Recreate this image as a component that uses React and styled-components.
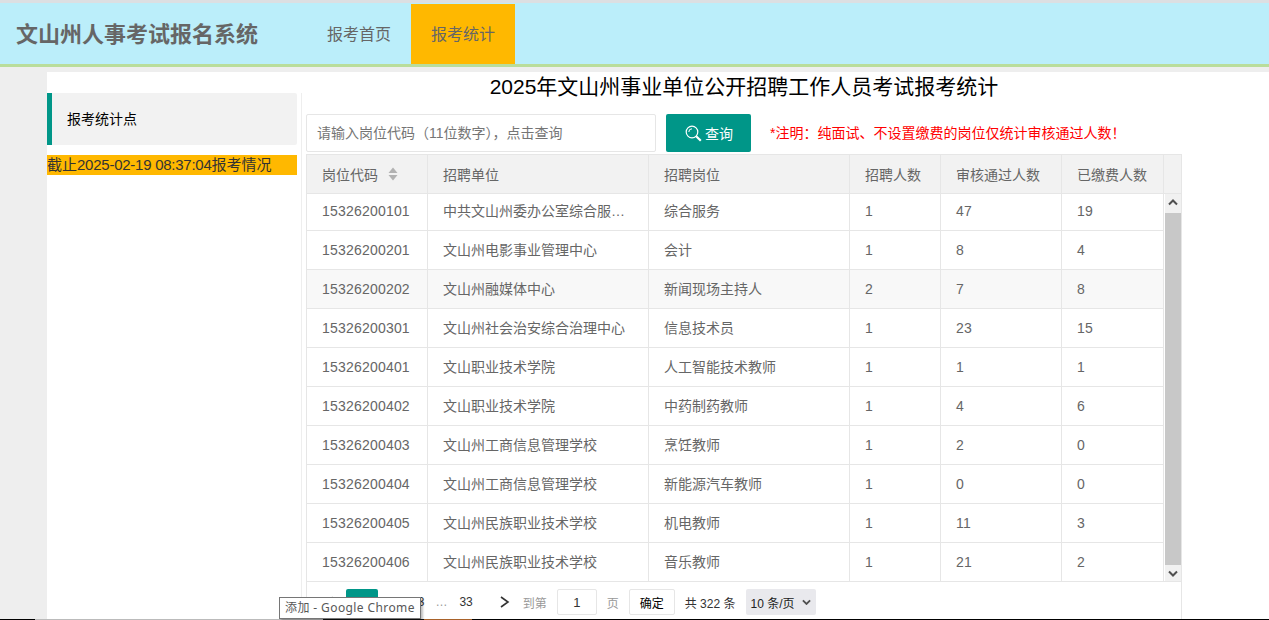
import styled, { createGlobalStyle } from "styled-components";
import { useState } from "react";

const GlobalStyle = createGlobalStyle`
  html, body {
    margin: 0;
    padding: 0;
    height: 100%;
    overflow: hidden;
    background: #eeeeee;
  }
  body {
    font-family: "Liberation Sans", "Noto Sans CJK SC", sans-serif;
    font-size: 14px;
    color: #666;
  }
  * { box-sizing: border-box; }
`;

const Page = styled.div`
  position: relative;
  height: 620px;
  overflow: hidden;
  border-top: 3px solid #dcdfe2;
`;

const Header = styled.header`
  height: 64px;
  padding-top: 1px;
  display: flex;
  background: #bbeefa;
  border-bottom: 3px solid #b9dd9b;
`;

const Logo = styled.div`
  width: 307px;
  padding-left: 16px;
  font-size: 22px;
  font-weight: bold;
  line-height: 61px;
  color: #666;
`;

const NavItem = styled.a`
  height: 60px;
  padding: 0 20px;
  font-size: 16px;
  line-height: 61px;
  color: #666;
  background: ${(p) => (p.$active ? "#ffb800" : "transparent")};
`;

const Body = styled.div`
  margin: 5px 0 0 47px;
  height: 548px;
  background: #fff;
`;

const Title = styled.h1`
  margin: 0;
  height: 21px;
  padding-left: 172px;
  text-align: center;
  font-size: 21px;
  font-weight: normal;
  line-height: 30px;
  color: #000;
`;

const Columns = styled.div`
  display: flex;
`;

const Side = styled.aside`
  width: 254px;
  flex: none;
`;

const SideTab = styled.div`
  width: 250px;
  height: 52px;
  padding-left: 15px;
  background: #f2f2f2;
  border-left: 5px solid #009688;
  border-radius: 0 2px 2px 0;
  font-size: 14px;
  line-height: 52px;
  color: #000;
`;

const Deadline = styled.div`
  width: 250px;
  height: 20px;
  margin-top: 10px;
  background: #ffb800;
  font-size: 15px;
  line-height: 20px;
  color: #333;
  white-space: nowrap;
`;

const DeadlineTime = styled.span`
  letter-spacing: -0.25px;
`;

const Main = styled.main`
  width: 881px;
  height: 527px;
  padding: 21px 0 0 4px;
  border-left: 1px solid #eeeeee;
`;

const SearchRow = styled.div`
  display: flex;
  align-items: center;
  height: 38px;
  margin-bottom: 2px;
`;

const SearchInput = styled.input`
  width: 350px;
  height: 38px;
  padding: 0 10px;
  border: 1px solid #e6e6e6;
  border-radius: 2px;
  background: #fff;
  outline: none;
  font-family: inherit;
  font-size: 14px;
  color: #666;
  &::placeholder { color: #757575; opacity: 1; }
`;

const SearchButton = styled.button`
  width: 85px;
  height: 38px;
  margin-left: 10px;
  padding: 0 0 0 1px;
  display: flex;
  align-items: center;
  justify-content: center;
  gap: 3px;
  border: 0;
  border-radius: 2px;
  background: #009688;
  color: #fff;
  font-family: inherit;
  font-size: 14px;
`;

const Notice = styled.span`
  margin-left: 19px;
  padding-bottom: 2px;
  font-size: 14px;
  color: #ff0000;
  white-space: nowrap;
`;

const TableBox = styled.div`
  width: 876px;
  border: 1px solid #e6e6e6;
  border-bottom: 0;
`;

const Grid = styled.div`
  display: grid;
  grid-template-columns: 121px 221px 201px 91px 121px 102px 17px;
`;

const HeadCell = styled.div`
  height: 39px;
  padding-left: 15px;
  display: flex;
  align-items: center;
  gap: 10px;
  background: #f2f2f2;
  border-right: ${(p) => (p.$last ? "0" : "1px solid #e6e6e6")};
  border-bottom: 1px solid #e6e6e6;
  font-size: 14px;
  color: #666;
`;

const Row = styled.div`
  display: contents;
  color: #666;
`;

const Cell = styled.div`
  height: ${(p) => (p.$first ? 37 : 39)}px;
  padding: 0 15px;
  border-right: 1px solid #e6e6e6;
  border-bottom: 1px solid #e6e6e6;
  background: ${(p) => (p.$hover ? "#f8f8f8" : "#fff")};
  font-size: 14px;
  line-height: ${(p) => (p.$first ? 34 : 38)}px;
  letter-spacing: ${(p) => (p.$num ? "0.2px" : "0")};
  white-space: nowrap;
  overflow: hidden;
  text-overflow: ellipsis;
`;

const Scrollbar = styled.div`
  grid-column: 7;
  grid-row: 2 / span 10;
  padding-left: 1px;
  border-bottom: 1px solid #e6e6e6;
`;

const ScrollTrack = styled.div`
  height: 100%;
  display: flex;
  flex-direction: column;
  background: #f1f1f1;
`;

const ScrollArrow = styled.div`
  height: ${(p) => p.$h}px;
  padding-bottom: ${(p) => p.$pb || 0}px;
  display: flex;
  align-items: center;
  justify-content: center;
  flex: none;
`;

const ScrollThumb = styled.div`
  flex: 1;
  background: #c8c8c8;
`;

const Pager = styled.div`
  height: 38px;
  padding-top: 2px;
  display: flex;
  align-items: center;
  font-size: 12px;
  color: #333;
`;

const PageCurrent = styled.span`
  width: 32px;
  height: 26px;
  margin-left: 12px;
  background: #009688;
  border-radius: 2px;
  color: #fff;
  text-align: center;
  line-height: 26px;
  flex: none;
`;

const PageNum = styled.span`
  margin-left: ${(p) => p.$gap || 0}px;
  color: ${(p) => (p.$muted ? "#999" : "#333")};
  white-space: nowrap;
`;

const PagerArrow = styled.svg`
  width: 10px;
  height: 12px;
  margin-left: ${(p) => p.$gap}px;
  flex: none;
`;

const PageInput = styled.input`
  width: 40px;
  height: 26px;
  margin-left: 10px;
  border: 1px solid #e6e6e6;
  border-radius: 2px;
  text-align: center;
  font-family: inherit;
  font-size: 13px;
  color: #333;
  outline: none;
`;

const ConfirmButton = styled.button`
  width: 46px;
  height: 26px;
  margin-left: 10px;
  padding: 0;
  background: #fff;
  border: 1px solid #e6e6e6;
  border-radius: 2px;
  font-family: inherit;
  font-size: 12px;
  color: #000;
`;

const SizeSelect = styled.div`
  width: 70px;
  height: 26px;
  margin-left: 11px;
  padding-left: 4px;
  display: flex;
  align-items: center;
  gap: 7px;
  background: #e9e9ed;
  border-radius: 2px;
  font-size: 12px;
  color: #222;
  white-space: nowrap;
`;

const Tooltip = styled.div`
  position: absolute;
  left: 279px;
  top: 594px;
  z-index: 2;
  width: 142px;
  height: 22px;
  padding-left: 5px;
  background: #fff;
  border: 1px solid #767676;
  box-shadow: 2px 2px 2px rgba(0, 0, 0, 0.25);
  font-family: "Noto Sans", "Noto Sans CJK SC", sans-serif;
  font-size: 12px;
  line-height: 19px;
  letter-spacing: 0.4px;
  color: #575757;
  white-space: nowrap;
`;

const BottomEdge = styled.div`
  position: absolute;
  left: 0;
  right: 0;
  bottom: 0;
  z-index: 1;
  height: 1px;
  background: linear-gradient(
    to right,
    #000 35px,
    #bbb 35px,
    #bbb 323px,
    #111 323px,
    #111 424px,
    #a8622a 424px,
    #a8622a 472px,
    #000 472px
  );
`;

const SortIcon = () => (
  <svg width="10" height="14" viewBox="0 0 10 14">
    <path d="M5 0.5 9.5 6H.5z" fill="#b2b2b2" />
    <path d="M5 13.5.5 8h9z" fill="#b2b2b2" />
  </svg>
);

const SearchIcon = () => (
  <svg width="17" height="17" viewBox="0 0 17 17" fill="none" stroke="#fff">
    <circle cx="7" cy="7" r="5.8" strokeWidth="1.2" />
    <path d="M3.8 7A3.2 3.2 0 0 1 7 3.8" strokeWidth="1" />
    <path d="M11.2 11.2 15.8 15.8" strokeWidth="2.2" />
  </svg>
);

const Chevron = ({ down, size = 10 }) => (
  <svg width={size} height={size * 0.7} viewBox="0 0 10 7" fill="none" stroke="#505050" strokeWidth="2">
    <path d={down ? "M1 1.5 5 5.5 9 1.5" : "M1 5.5 5 1.5 9 5.5"} />
  </svg>
);

const rows = [
  ["15326200101", "中共文山州委办公室综合服务中心", "综合服务", "1", "47", "19"],
  ["15326200201", "文山州电影事业管理中心", "会计", "1", "8", "4"],
  ["15326200202", "文山州融媒体中心", "新闻现场主持人", "2", "7", "8"],
  ["15326200301", "文山州社会治安综合治理中心", "信息技术员", "1", "23", "15"],
  ["15326200401", "文山职业技术学院", "人工智能技术教师", "1", "1", "1"],
  ["15326200402", "文山职业技术学院", "中药制药教师", "1", "4", "6"],
  ["15326200403", "文山州工商信息管理学校", "烹饪教师", "1", "2", "0"],
  ["15326200404", "文山州工商信息管理学校", "新能源汽车教师", "1", "0", "0"],
  ["15326200405", "文山州民族职业技术学校", "机电教师", "1", "11", "3"],
  ["15326200406", "文山州民族职业技术学校", "音乐教师", "1", "21", "2"],
];

const heads = ["招聘单位", "招聘岗位", "招聘人数", "审核通过人数", "已缴费人数"];

export default function App() {
  const [code, setCode] = useState("");
  return (
    <Page>
      <GlobalStyle />
      <Header>
        <Logo>文山州人事考试报名系统</Logo>
        <NavItem>报考首页</NavItem>
        <NavItem $active>报考统计</NavItem>
      </Header>
      <Body>
        <Title>2025年文山州事业单位公开招聘工作人员考试报考统计</Title>
        <Columns>
          <Side>
            <SideTab>报考统计点</SideTab>
            <Deadline>
              截止<DeadlineTime>2025-02-19 08:37:04</DeadlineTime>报考情况
            </Deadline>
          </Side>
          <Main>
            <SearchRow>
              <SearchInput
                placeholder="请输入岗位代码（11位数字），点击查询"
                value={code}
                onChange={(e) => setCode(e.target.value)}
              />
              <SearchButton>
                <SearchIcon />
                查询
              </SearchButton>
              <Notice>*注明：纯面试、不设置缴费的岗位仅统计审核通过人数！</Notice>
            </SearchRow>
            <TableBox>
              <Grid>
                <HeadCell>
                  岗位代码
                  <SortIcon />
                </HeadCell>
                {heads.map((h) => (
                  <HeadCell key={h}>{h}</HeadCell>
                ))}
                <HeadCell $last />
                {rows.map((r, i) => (
                  <Row key={r[0]}>
                    {r.map((c, j) => (
                      <Cell key={j} $first={i === 0} $hover={i === 2} $num={j === 0 || j > 2}>
                        {c}
                      </Cell>
                    ))}
                  </Row>
                ))}
                <Scrollbar>
                  <ScrollTrack>
                    <ScrollArrow $h={19} $pb={3}>
                      <Chevron />
                    </ScrollArrow>
                    <ScrollThumb />
                    <ScrollArrow $h={16}>
                      <Chevron down />
                    </ScrollArrow>
                  </ScrollTrack>
                </Scrollbar>
              </Grid>
              <Pager>
                <PagerArrow $gap={17} viewBox="0 0 10 12" fill="none" stroke="#d2d2d2" strokeWidth="1.6">
                  <path d="M9 1 2 6 9 11" />
                </PagerArrow>
                <PageCurrent>1</PageCurrent>
                <PageNum $gap={12}>2</PageNum>
                <PageNum $gap={21}>3</PageNum>
                <PageNum $gap={11} $muted>…</PageNum>
                <PageNum $gap={12}>33</PageNum>
                <PagerArrow $gap={27} viewBox="0 0 10 12" fill="none" stroke="#333" strokeWidth="1.6">
                  <path d="M1 1 8 6 1 11" />
                </PagerArrow>
                <PageNum $gap={13} $muted>到第</PageNum>
                <PageInput defaultValue="1" />
                <PageNum $gap={10} $muted>页</PageNum>
                <ConfirmButton>确定</ConfirmButton>
                <PageNum $gap={10}>共 322 条</PageNum>
                <SizeSelect>
                  10 条/页
                  <Chevron down size={9} />
                </SizeSelect>
              </Pager>
            </TableBox>
          </Main>
        </Columns>
      </Body>
      <Tooltip>添加 - Google Chrome</Tooltip>
      <BottomEdge />
    </Page>
  );
}
